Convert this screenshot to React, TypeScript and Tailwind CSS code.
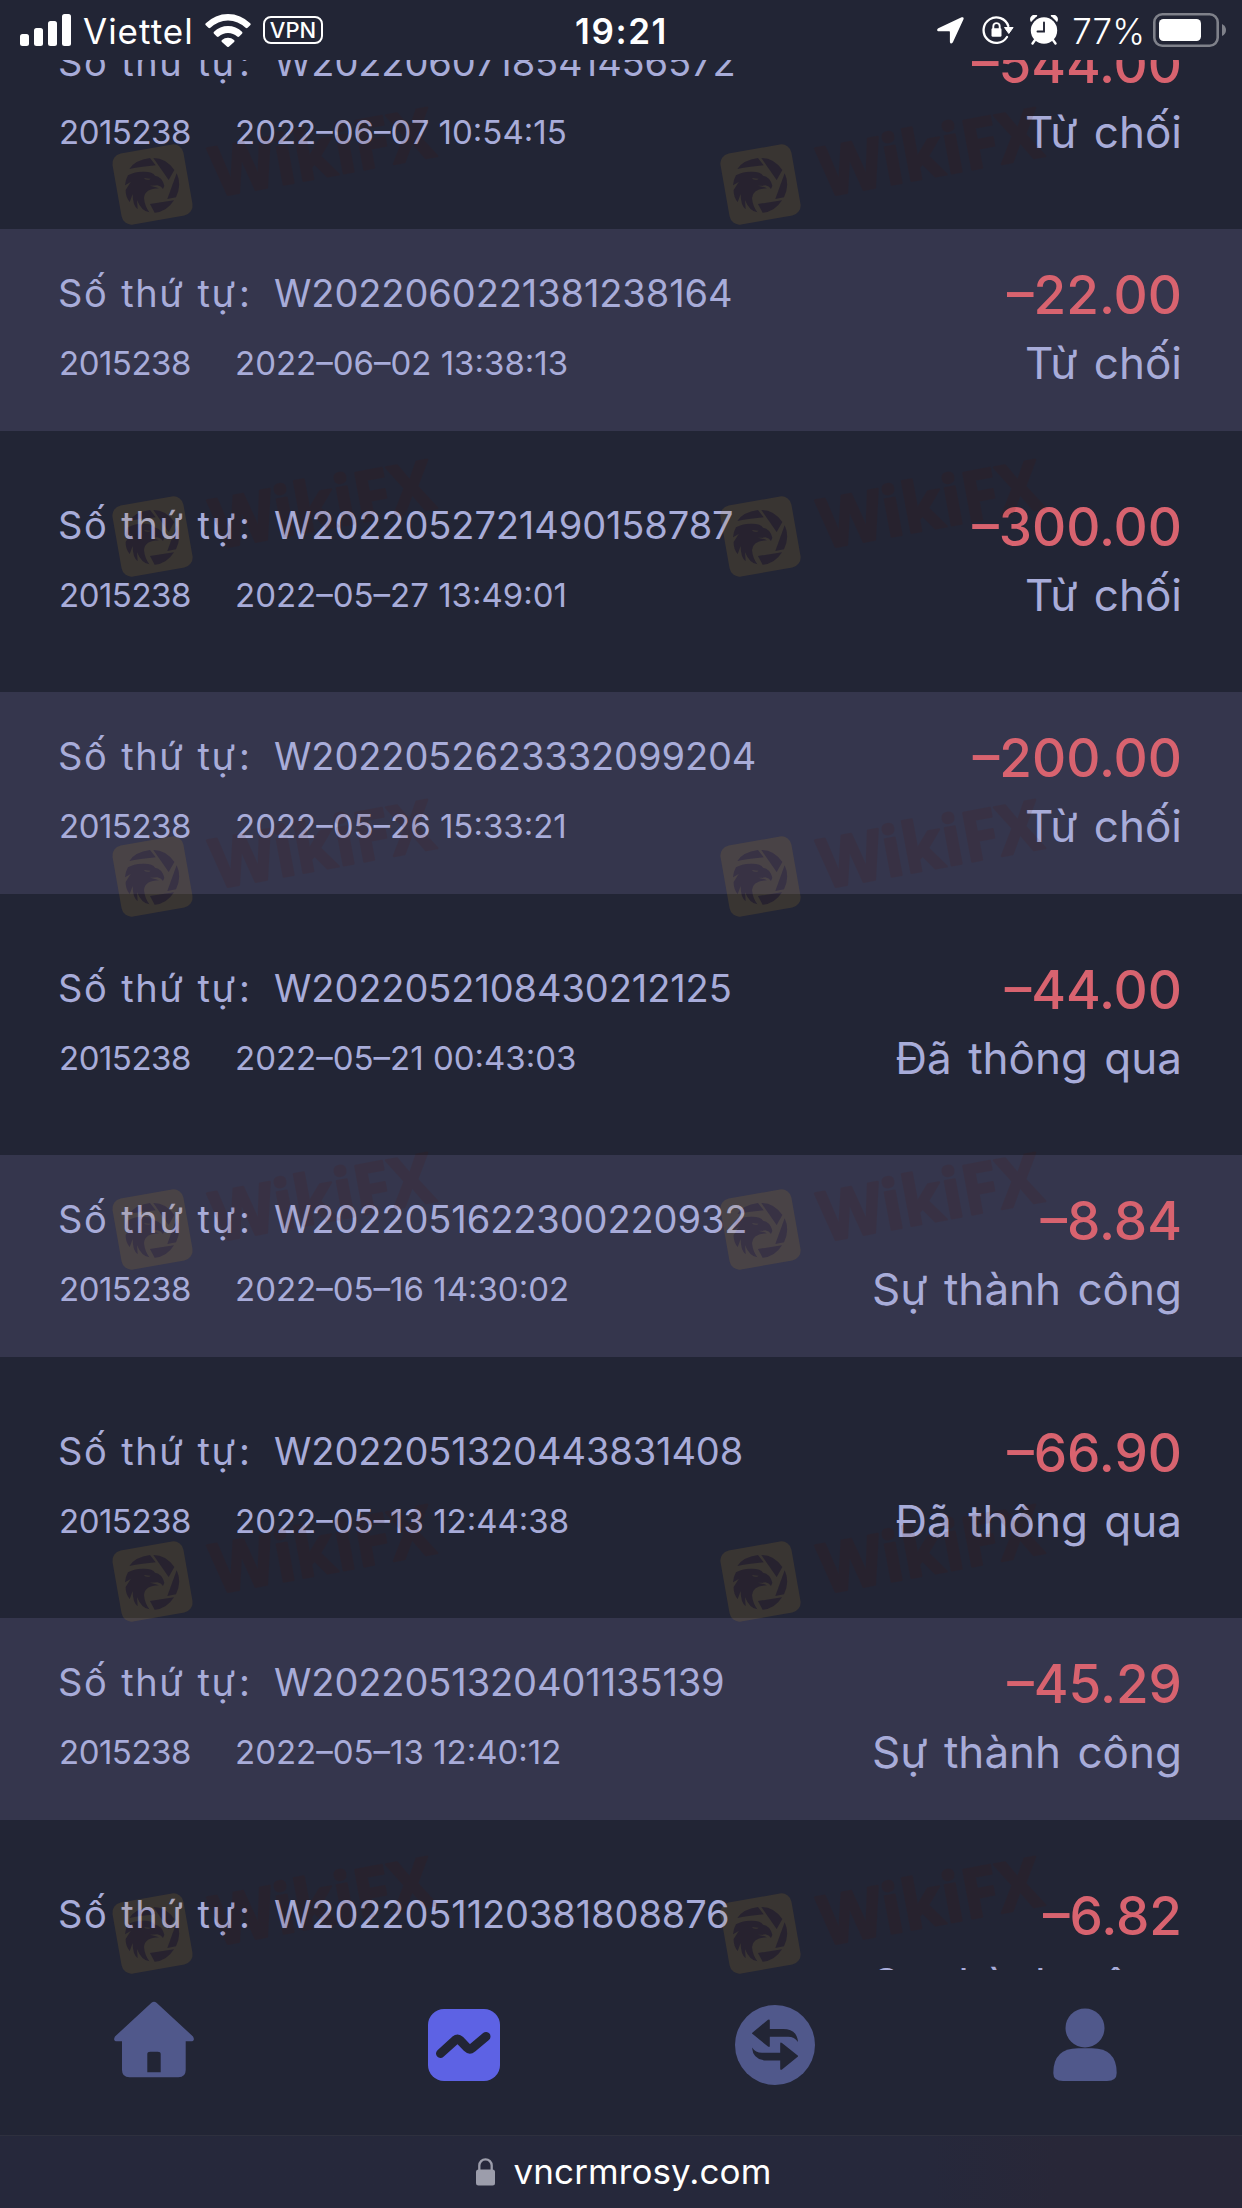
import { useId } from "react";

interface Withdrawal {
    order: string;
    date: string;
    amount: string;
    status: string;
}

const USER_ID = "2015238";

const withdrawals: Withdrawal[] = [
    { order: "W2022060718541456572", date: "2022–06–07 10:54:15", amount: "–544.00", status: "Từ chối" },
    { order: "W2022060221381238164", date: "2022–06–02 13:38:13", amount: "–22.00", status: "Từ chối" },
    { order: "W2022052721490158787", date: "2022–05–27 13:49:01", amount: "–300.00", status: "Từ chối" },
    { order: "W2022052623332099204", date: "2022–05–26 15:33:21", amount: "–200.00", status: "Từ chối" },
    { order: "W2022052108430212125", date: "2022–05–21 00:43:03", amount: "–44.00", status: "Đã thông qua" },
    { order: "W2022051622300220932", date: "2022–05–16 14:30:02", amount: "–8.84", status: "Sự thành công" },
    { order: "W2022051320443831408", date: "2022–05–13 12:44:38", amount: "–66.90", status: "Đã thông qua" },
    { order: "W2022051320401135139", date: "2022–05–13 12:40:12", amount: "–45.29", status: "Sự thành công" },
    { order: "W2022051120381808876", date: "2022–05–11 10:38:18", amount: "–6.82", status: "Sự thành công" },
];

function SignalIcon() {
    return (
        <svg width="51" height="32" viewBox="0 0 51 32" fill="currentColor">
            <rect x="0" y="20" width="9" height="12" rx="2.5" />
            <rect x="14" y="14" width="9" height="18" rx="2.5" />
            <rect x="28" y="7" width="9" height="25" rx="2.5" />
            <rect x="42" y="0" width="9" height="32" rx="2.5" />
        </svg>
    );
}

function WifiIcon() {
    return (
        <svg width="46" height="33" viewBox="0 0 46 33" fill="currentColor">
            <path d="M0.8 9.2a31.5 31.5 0 0 1 44.4 0q1 1 0 2l-2.6 2.6q-1 .9-2 0a24.8 24.8 0 0 0-35.2 0q-1 .9-2 0l-2.6-2.6q-1-1 0-2z" />
            <path d="M9 17.8a20 20 0 0 1 28 0q1 1 0 2l-2.8 2.8q-1 .9-2 0a13.5 13.5 0 0 0-18.4 0q-1 .9-2 0L9 19.8q-1-1 0-2z" />
            <path d="M17 26a9 9 0 0 1 12 0q1 1 .1 1.9l-5 4.7q-1.1.9-2.2 0l-5-4.7q-.9-.9.1-1.9z" />
        </svg>
    );
}

function LocationIcon() {
    return (
        <svg width="27" height="27" viewBox="0 0 27 27" fill="currentColor">
            <path d="M24.6.3 1.3 11.3c-1.8.9-1.4 3 .6 3h10.4q.6 0 .6.6v9.8c0 2 2.2 2.4 3 .6L26.5 2.2C27.1.8 26 -.3 24.6.3z" />
        </svg>
    );
}

function RotationLockIcon() {
    return (
        <svg width="32" height="30" viewBox="0 0 32 30" fill="none" stroke="currentColor" strokeWidth="2.3">
            <path d="M26.3 11A12.7 12.7 0 1 0 25 22" strokeLinecap="round" />
            <path d="M22.5 12.5h8.6l-4.3 6z" fill="currentColor" strokeWidth="1" strokeLinejoin="round" />
            <path d="M11.3 14v-2.7a3.2 3.2 0 0 1 6.4 0V14" strokeWidth="1.9" />
            <rect x="9.5" y="13.3" width="10" height="8.4" rx="1.3" fill="currentColor" stroke="none" />
        </svg>
    );
}

function AlarmIcon() {
    return (
        <svg width="28" height="30" viewBox="0 0 28 30" fill="currentColor">
            <circle cx="14" cy="15.5" r="13.2" />
            <path d="M1.5 6.5a4 4 0 0 1 5.5-5.5M26.5 6.5A4 4 0 0 0 21 1" stroke="currentColor" strokeWidth="1.5" />
            <path d="M5 25l-2.5 3.5M23 25l2.5 3.5" stroke="currentColor" strokeWidth="2.4" strokeLinecap="round" />
            <path d="M14 7.5v9H7.5" fill="none" stroke="#222535" strokeWidth="1.9" strokeLinecap="round" />
        </svg>
    );
}

function BatteryIcon() {
    return (
        <svg width="74" height="34" viewBox="0 0 74 34">
            <rect x="1.3" y="1.3" width="63.4" height="31.4" rx="8" fill="none" stroke="#7f818a" strokeWidth="2.6" />
            <path d="M69 11q4 2 4 6t-4 6z" fill="#7f818a" />
            <rect x="6" y="6" width="42" height="22" rx="4.5" fill="#fff" />
        </svg>
    );
}

function StatusBar() {
    return (
        <header className="grid h-[60px] shrink-0 grid-cols-[1fr_auto_1fr] items-center pr-[15px] pl-5 text-[35px] leading-[60px] text-white">
            <div className="flex items-center">
                <SignalIcon />
                <span className="ml-3 h-[60px] w-[122px] pt-px tracking-[1px]">Viettel</span>
                <WifiIcon />
                <span className="ml-3 flex h-7 w-[60px] items-center justify-center rounded-[8px] border-2 border-white text-[22px] leading-none font-medium">
                    VPN
                </span>
            </div>
            <span className="h-[60px] pt-px pr-1 font-semibold tracking-[1.6px]">19:21</span>
            <div className="flex items-center justify-end">
                <LocationIcon />
                <span className="ml-[18px]"><RotationLockIcon /></span>
                <span className="ml-4"><AlarmIcon /></span>
                <span className="mr-2 ml-[14px] h-[60px] pt-px font-[350]">77%</span>
                <BatteryIcon />
            </div>
        </header>
    );
}

function WithdrawalRow({ item, striped }: { item: Withdrawal; striped: boolean }) {
    return (
        <li className={`flex h-[202px] shrink-0 justify-between px-[60px] pt-[35px] whitespace-nowrap ${striped ? "bg-[#35364d]" : ""}`}>
            <div className="font-[370] text-[#a8acd9]">
                <p className="flex h-[60px] text-[38px] leading-[58px]">
                    <span className="-ml-[2px] w-[179px] tracking-[1.5px] [word-spacing:1px]">Số thứ tự</span>
                    <span className="w-[37px] pl-[2px]">:</span>
                    <span className="tracking-[-0.1px]">{item.order}</span>
                </p>
                <p className="mt-[10px] flex h-[60px] text-[33px] leading-[58px]">
                    <span className="-ml-px w-[176px] tracking-[-0.5px]">{USER_ID}</span>
                    <span>{item.date}</span>
                </p>
            </div>
            <div className="text-right">
                <p className="h-[60px] pt-px text-[53px] leading-[60px] font-medium text-[#d8636f]">{item.amount}</p>
                <p className="mt-[10px] h-[60px] text-[44px] leading-[59px] font-[370] text-[#a8acd9] [word-spacing:4px]">{item.status}</p>
            </div>
        </li>
    );
}

function HomeIcon() {
    return (
        <svg width="80" height="80" viewBox="0 0 80 80" fill="#50588b" className="overflow-visible">
            <path
                fillRule="evenodd"
                d="M37.5-2.3q2.5-2 5 0L79 31.5q2.5 4.5-2 4.8H71.7V65q0 7.3-7.3 7.3H15.5Q8 72.3 8 65V36.3H3q-4.5-.3-2-4.8zM33.3 67.3H46.7V49q0-2.3-3-2.3h-7.4q-3 0-3 2.3z"
            />
        </svg>
    );
}

function ChartIcon() {
    return (
        <svg width="80" height="80" viewBox="0 0 80 80" fill="none">
            <rect x="4" y="4" width="72" height="72" rx="16" fill="#5d62e4" />
            <path
                d="M16.5 48.5 31 35.3q2.7-2.3 5 0l7.3 7.5q2.4 2.3 5 .2L62 31.5"
                stroke="#222535"
                strokeWidth="9"
                strokeLinecap="round"
                strokeLinejoin="round"
            />
        </svg>
    );
}

function ExchangeIcon() {
    const arrow = "M17 28 33 14.8q1.8-1 1.8 1V24H48q14 0 15 13-3.5-5.3-10-5.3H34.8v9q0 2-1.8.8L17 28.6z";
    return (
        <svg width="80" height="80" viewBox="0 0 80 80">
            <circle cx="40" cy="40" r="40" fill="#50588b" />
            <path d={arrow} fill="#222535" />
            <path d={arrow} fill="#222535" transform="rotate(180 40 39.7)" />
        </svg>
    );
}

function PersonIcon() {
    return (
        <svg width="80" height="80" viewBox="0 0 80 80" fill="#50588b">
            <circle cx="40" cy="23" r="19.5" />
            <path d="M8.3 68Q8.3 43.3 33 43.3H47Q71.7 43.3 71.7 68 71.7 76 62 76H18Q8.3 76 8.3 68z" />
        </svg>
    );
}

function TabBar() {
    return (
        <nav className="-ml-px grid h-[165px] shrink-0 grid-cols-4 justify-items-center pt-[35px] pr-[2px]">
            <HomeIcon />
            <ChartIcon />
            <ExchangeIcon />
            <PersonIcon />
        </nav>
    );
}

function AddressBar() {
    return (
        <footer className="flex h-[73px] shrink-0 items-center justify-center border-t border-[#2e303e] bg-linear-to-r from-[#26283b] from-75% to-[#282738] to-85% pb-px pl-[5px] text-white">
            <svg width="19" height="28" viewBox="0 0 19 28">
                <path d="M3.3 13V7.5a6.2 6.2 0 0 1 12.4 0V13" fill="none" stroke="#9c9dab" strokeWidth="2.3" />
                <rect x="0" y="11.5" width="19" height="16" rx="2.5" fill="#9c9dab" />
            </svg>
            <span className="ml-[19px] text-[35px] tracking-[0.1px]">vncrmrosy.com</span>
        </footer>
    );
}

// aperture blades and the eagle head, cut out of the badge
function EmblemShapes() {
    return (
        <g transform="translate(-5 -12) scale(0.33333)">
            <path d="M88 243Q105 216 150 210L167 232 128 236Q105 238 88 243z" />
            <path d="M160 210Q198 210 223 246L206 276z" />
            <path d="M230 256Q246 290 228 328L202 333z" />
            <path d="M150 348 222 337Q200 372 164 374z" />
            <path
                fillRule="evenodd"
                d="M84 262Q100 252 128 251 158 250 165 263 186 266 193 293L189 303Q184 294 172 292 163 293 150 293 166 296 177 301 134 302 132 330 134 354 148 373 124 369 111 336L113 364Q98 352 98 318L89 342Q76 326 77 306L92 282 75 292Q76 276 84 262zM131 270Q142 280 152 272 143 272 131 270z"
            />
        </g>
    );
}

function Watermark() {
    const maskId = useId();
    return (
        <svg width="345" height="130" viewBox="0 0 345 130" className="overflow-visible">
            <mask id={maskId} maskUnits="userSpaceOnUse" x="0" y="30" width="100" height="100">
                <rect x="0" y="30" width="100" height="100" fill="#fff" />
                <EmblemShapes />
            </mask>
            <g mask={`url(#${maskId})`}>
                <rect
                    x="11.5"
                    y="48.5"
                    width="72"
                    height="72"
                    rx="10"
                    transform="rotate(-10 47.5 84.5)"
                    fill="#b48723"
                    opacity="0.16"
                />
            </g>
            <g fill="#541100" opacity="0.1">
                <EmblemShapes />
            </g>
            <text
                x="111"
                y="97"
                transform="rotate(-10.5 111 97)"
                textLength="225"
                lengthAdjust="spacingAndGlyphs"
                className="font-['Open_Sans',sans-serif] text-[69px] font-bold"
                fill="#541100"
                stroke="#541100"
                strokeWidth="2.5"
                strokeLinejoin="round"
                opacity="0.11"
            >
                WikiFX
            </text>
        </svg>
    );
}

export default function App() {
    return (
        <div className="relative flex h-[2208px] w-[1242px] flex-col overflow-hidden bg-[#222535] font-['Inter','Noto_Sans',sans-serif]">
            <StatusBar />
            <main className="h-[1910px] shrink-0 overflow-hidden">
                <ul className="-mt-[62.5px] flex flex-col gap-[29.5px]">
                    {withdrawals.map((item, i) => (
                        <WithdrawalRow key={item.order} item={item} striped={i % 2 === 1} />
                    ))}
                </ul>
            </main>
            <TabBar />
            <AddressBar />

            {/* Watermark overlay */}
            <div className="pointer-events-none absolute top-[100px] left-[105px] grid grid-cols-[608px_345px] grid-rows-[352px_340px_353px_352px_352px_352px]">
                {Array.from({ length: 12 }, (_, i) => (
                    <Watermark key={i} />
                ))}
            </div>
        </div>
    );
}
